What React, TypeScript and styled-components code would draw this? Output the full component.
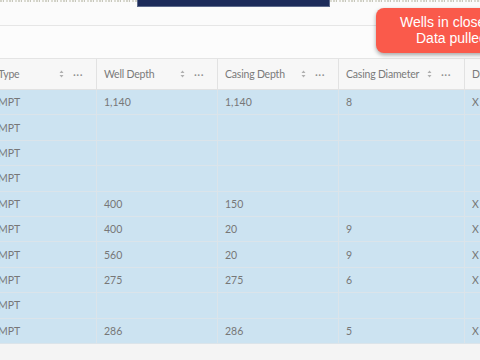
import styled, { createGlobalStyle } from 'styled-components'

const GlobalStyle = createGlobalStyle`
  html, body {
    margin: 0;
    padding: 0;
    background: #f4f4f4;
    overflow: hidden;
  }
  body {
    width: 480px;
    height: 360px;
    font-family: Lato, 'Open Sans', sans-serif;
  }
`

interface Column {
  title: string
  width: number
}

const columns: Column[] = [
  { title: 'Use Type', width: 125 },
  { title: 'Well Depth', width: 121 },
  { title: 'Casing Depth', width: 121 },
  { title: 'Casing Diameter', width: 126 },
  { title: 'Drilled', width: 90 },
]

const rows: string[][] = [
  ['EXEMPT', '1,140', '1,140', '8', 'X'],
  ['EXEMPT', '', '', '', ''],
  ['EXEMPT', '', '', '', ''],
  ['EXEMPT', '', '', '', ''],
  ['EXEMPT', '400', '150', '', 'X'],
  ['EXEMPT', '400', '20', '9', 'X'],
  ['EXEMPT', '560', '20', '9', 'X'],
  ['EXEMPT', '275', '275', '6', 'X'],
  ['EXEMPT', '', '', '', ''],
  ['EXEMPT', '286', '286', '5', 'X'],
]

const SortIcon = () => (
  <svg width="5" height="8" viewBox="0 0 5 8">
    <path d="M2.5 0.5 L4.5 3 H0.5 Z M2.5 7.5 L4.5 5 H0.5 Z" fill="#b0b0b0" />
  </svg>
)

export default function App() {
  return (
    <>
      <GlobalStyle />
      <Page>
        <TopStrip>
          <Noise />
          <Banner />
        </TopStrip>
        <Toolbar />
        <Subbar />
        <Grid>
          <HeaderRow>
            {columns.map((c) => (
              <HeaderCell key={c.title} width={c.width}>
                <span>{c.title}</span>
                <HeaderTools>
                  <SortIcon />
                  <Dots>···</Dots>
                </HeaderTools>
              </HeaderCell>
            ))}
          </HeaderRow>
          {rows.map((r, i) => (
            <Row key={i}>
              {r.map((v, j) => (
                <Cell key={j} width={columns[j].width}>
                  {v}
                </Cell>
              ))}
            </Row>
          ))}
        </Grid>
        <Toast>
          <ToastLine indent={24}>Wells in closest proximity</ToastLine>
          <ToastLine indent={40}>Data pulled from state records</ToastLine>
        </Toast>
      </Page>
    </>
  )
}

const Page = styled.div`
  position: relative;
  width: 480px;
  height: 360px;
  overflow: hidden;
  background: #f4f4f4;
`

const TopStrip = styled.div`
  position: relative;
  height: 7px;
  background: #fbfbfb;
`

// clipped bottom edge of a text line scrolled out of view
const Noise = styled.div`
  height: 2px;
  background: repeating-linear-gradient(
    90deg,
    #c9c9bc 0 2px,
    #f2f2ec 2px 3px,
    #b9b9ac 3px 4px,
    #fbfbfb 4px 6px,
    #d4d4c8 6px 8px,
    #fbfbfb 8px 9px
  );
  opacity: 0.8;
`

const Banner = styled.div`
  position: absolute;
  left: 137px;
  top: 0;
  width: 193px;
  height: 7px;
  background: #1c2b5a;
  border: 1px solid #5d6a8c;
  border-top: none;
  box-sizing: border-box;
`

const Toolbar = styled.div`
  height: 18px;
  background: #fbfbfb;
  border-bottom: 1px solid #e6e6e6;
`

const Subbar = styled.div`
  height: 32px;
  background: #fcfcfc;
`

const Grid = styled.div`
  margin-left: -28px;
  border-top: 1px solid #e4e4e4;
`

const HeaderRow = styled.div`
  display: flex;
  height: 30px;
  background: #f7f7f7;
  border-bottom: 1px solid #e2e2e2;
`

const HeaderCell = styled.div<{ width: number }>`
  flex: 0 0 ${({ width }) => width}px;
  box-sizing: border-box;
  display: flex;
  align-items: center;
  justify-content: space-between;
  padding: 0 13px 0 7px;
  border-right: 1px solid #e2e2e2;
  font-size: 10.5px;
  letter-spacing: -0.2px;
  color: #7a7a7a;
  white-space: nowrap;
`

const HeaderTools = styled.div`
  display: flex;
  align-items: center;
  gap: 9px;
`

const Dots = styled.span`
  font-size: 11px;
  letter-spacing: 0.5px;
  color: #8e8e8e;
`

const Row = styled.div`
  display: flex;
  height: 24.4px;
  background: #cce3f1;
  border-bottom: 1px solid #dbe4ea;
`

const Cell = styled.div<{ width: number }>`
  flex: 0 0 ${({ width }) => width}px;
  box-sizing: border-box;
  display: flex;
  align-items: center;
  padding: 0 7px;
  border-right: 1px solid #dbe4ea;
  font-size: 10.5px;
  color: #777777;
  white-space: nowrap;
`

const Toast = styled.div`
  position: absolute;
  left: 376px;
  top: 8px;
  width: 200px;
  height: 45px;
  box-sizing: border-box;
  padding-top: 6px;
  border-radius: 8px;
  background: #fa5a4b;
  box-shadow: 0 2px 4px rgba(0, 0, 0, 0.35);
  font-family: 'Liberation Sans', Arial, sans-serif;
  font-size: 14px;
  line-height: 16px;
  color: #ffffff;
`

const ToastLine = styled.div<{ indent: number }>`
  padding-left: ${({ indent }) => indent}px;
  white-space: nowrap;
`
